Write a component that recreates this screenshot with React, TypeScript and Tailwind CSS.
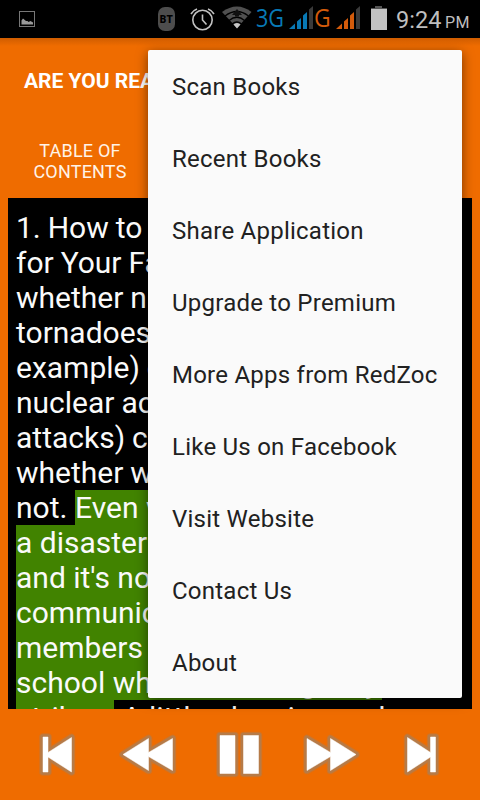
import type { ReactNode } from 'react';

const menuItems = [
  'Scan Books',
  'Recent Books',
  'Share Application',
  'Upgrade to Premium',
  'More Apps from RedZoc',
  'Like Us on Facebook',
  'Visit Website',
  'Contact Us',
  'About',
];

const plainLines = [
  '1. How to Prepare',
  'for Your Family,',
  'whether natural (like',
  'tornadoes, for',
  'example) or man (like',
  'nuclear accidents or',
  'attacks) can strike',
  'whether we like it or',
];

const highlightedLines = [
  'a disaster can be scary,',
  "and it's normal. Plan to",
  'communicate with all',
  'members at work or at',
  'school when an emergency',
];

function Signal({ color }: { color: string }) {
  return (
    <svg width="25" height="24" viewBox="0 0 25 24" className="block">
      <path d="M0 23 6 17.500v5.500z" fill={color} />
      <path d="M8 23V15.500l4-3.500v11z" fill={color} />
      <path d="M14 23V9.500l4-3.500v17z" fill={color} />
      <path d="M20 23V3.500l4-3.500v23z" fill="#3a3a3a" />
    </svg>
  );
}

function StatusBar() {
  return (
    <header className="flex h-[38px] shrink-0 items-start bg-black text-[#bebebe]">
      <svg width="17" height="17" viewBox="0 0 17 17" className="ml-[19px] mt-[11px]">
        <rect x="0.500" y="0.500" width="15" height="15" fill="none" stroke="#777" />
        <path d="M2.500 13.500V9.500L4 7.500l3 2.500 1.500 0 1 1 2-1 2.500 1.500v2z" fill="#999" />
      </svg>
      <div className="ml-[122px] mt-[7px] flex h-6 w-[17px] items-center justify-center rounded-[7px] bg-[#4d4d4d] font-['Roboto',sans-serif] text-[10px] font-black tracking-[0.500px] text-black">
        BT
      </div>
      <svg width="25" height="25" viewBox="0 0 25 25" className="ml-[15px] mt-[7px]" fill="none" stroke="#c2c2c2" strokeWidth="1.600">
        <circle cx="12.500" cy="13" r="9.700" />
        <path d="M12.500 7.500V13l4 4.500M1 7Q3 3.500 7 2M24 7Q22 3.500 18 2" />
      </svg>
      <svg width="30" height="23" viewBox="0 0 30 23" className="ml-[7px] mt-[6px]">
        <path d="M0 6Q15-5 29.500 6L15 22z" fill="#505050" />
        <path d="M3 10Q15 1 26.500 10M7 14.500Q15 8 22.500 14.500M10 18Q15 14 19.500 18" fill="none" stroke="#000" strokeWidth="1.300" />
        <path d="m15 3-5 6h3v1.500h4V9h3z" fill="#111" />
        <path d="M11.500 18.500q3.500-3 7 0L15 22.500z" fill="#c6c6c6" />
      </svg>
      <span className="ml-[4px] mt-px w-[30px] font-['Open_Sans',sans-serif] text-[26px] leading-[33px] text-[#0879b5]"><span className="inline-block origin-left scale-x-[0.830]">3G</span></span>
      <div className="ml-[3px] mt-[6px]"><Signal color="#0879b5" /></div>
      <span className="ml-0 mt-px w-[20px] font-['Open_Sans',sans-serif] text-[26px] leading-[33px] text-[#d35b0b]"><span className="inline-block origin-left scale-x-[0.880]">G</span></span>
      <div className="ml-[2px] mt-[6px]"><Signal color="#d35b0b" /></div>
      <svg width="16" height="24" viewBox="0 0 16 24" className="ml-[10px] mt-[6px]">
        <path d="M4 0h7v2h5v2H0V2h4z" fill="#555" />
        <path d="M0 3h16v21H0z" fill="#c2c2c2" />
      </svg>
      <span className="ml-[9px] mt-[3px] w-[46px] whitespace-nowrap font-['Roboto',sans-serif] text-[24px] leading-[34px]"><span className="inline-block origin-left scale-x-[0.980]">9:24</span></span>
      <span className="ml-[3px] mt-[6px] font-['Roboto',sans-serif] text-[16px] leading-[33px] tracking-[0.300px]">PM</span>
    </header>
  );
}

function Control({ label, children }: { label: string; children: ReactNode }) {
  return (
    <button aria-label={label} className="block h-[60px]">
      {children}
    </button>
  );
}

function Glyph({ d, width }: { d: string; width: number }) {
  return (
    <svg width={width} height="60" viewBox={`0 0 ${width} 60`} className="block overflow-visible">
      <path d={d} fill="none" stroke="#b67b48" strokeOpacity="0.500" strokeWidth="7.500" strokeLinejoin="round" />
      <path d={d} fill="none" stroke="#b67b48" strokeWidth="5.500" strokeLinejoin="round" />
      <path d={d} fill="#fff" stroke="#fff" strokeWidth="0.500" />
    </svg>
  );
}

function Player() {
  return (
    <footer className="flex h-[91px] shrink-0 items-start pl-[38px] pt-4">
      <Control label="Previous"><Glyph width={40} d="M5 12h5v15.500l23.500-15v34.500L10 32v15H5z" /></Control>
      <div className="ml-[42px]"><Control label="Rewind"><Glyph width={60} d="M3 29.500 28.500 13.500v14L52.500 13.500v32L28.500 31.500v14z" /></Control></div>
      <div className="ml-[36px]"><Control label="Pause"><Glyph width={50} d="M4 10.500h15v38H4zM27.500 10.500h15v38h-15z" /></Control></div>
      <div className="ml-[36px]"><Control label="Fast forward"><Glyph width={60} d="M5 13.500v32l23.500-14v14l25.500-16-25.500-16v14z" /></Control></div>
      <div className="ml-[40px]"><Control label="Next"><Glyph width={40} d="M5.500 12.500V47L28.500 32v15h5V12h-5v15.500z" /></Control></div>
    </footer>
  );
}

export default function App() {
  return (
    <div className="relative flex h-[800px] w-[480px] flex-col overflow-hidden bg-[#ef6c00] font-['Roboto',sans-serif]">
      <StatusBar />
      <div className="h-2 shrink-0 bg-linear-to-b from-[#d05d00] to-[#ef6c00]" />
      <section className="h-[152px] shrink-0 text-white">
        <h1 className="whitespace-nowrap pl-6 pt-[23px] text-[21px] font-bold leading-6">ARE YOU READY</h1>
        <div className="ml-4 mt-[47px] w-32 text-center text-[18px] leading-[21px] tracking-[0.200px] text-[#fff3e8]">TABLE OF<br />CONTENTS</div>
      </section>
      <main className="mx-2 h-[511px] shrink-0 overflow-hidden whitespace-nowrap bg-black pl-2 pt-3 text-[30px] leading-[35px] text-[#fafafa]">
        {plainLines.map((line) => (
          <div key={line} className="h-[35px] [word-spacing:-0.500px]">{line}</div>
        ))}
        <div className="flex h-[35px]">
          <span className="w-[59px]">not.</span>
          <span className="bg-[#418300]">Even when</span>
        </div>
        {highlightedLines.map((line) => (
          <div key={line} className="h-[35px] w-[366px] bg-[#418300]">{line}</div>
        ))}
        <div className="flex h-[35px]">
          <span className="w-[98px] bg-[#418300]">strikes.</span>
          <span className="ml-2">A little planning and</span>
        </div>
      </main>
      <Player />
      <nav className="absolute left-[148px] top-[50px] h-[648px] w-[314px] rounded-[2px] bg-[#fafafa] text-[#212121] shadow-[0_3px_12px_rgba(0,0,0,0.500)]">
        {menuItems.map((item) => (
          <div key={item} className="flex h-[72px] items-center whitespace-nowrap pl-6 text-[24px] leading-7">
            <span className="pt-[2px] tracking-[0.240px]">{item}</span>
          </div>
        ))}
      </nav>
    </div>
  );
}
